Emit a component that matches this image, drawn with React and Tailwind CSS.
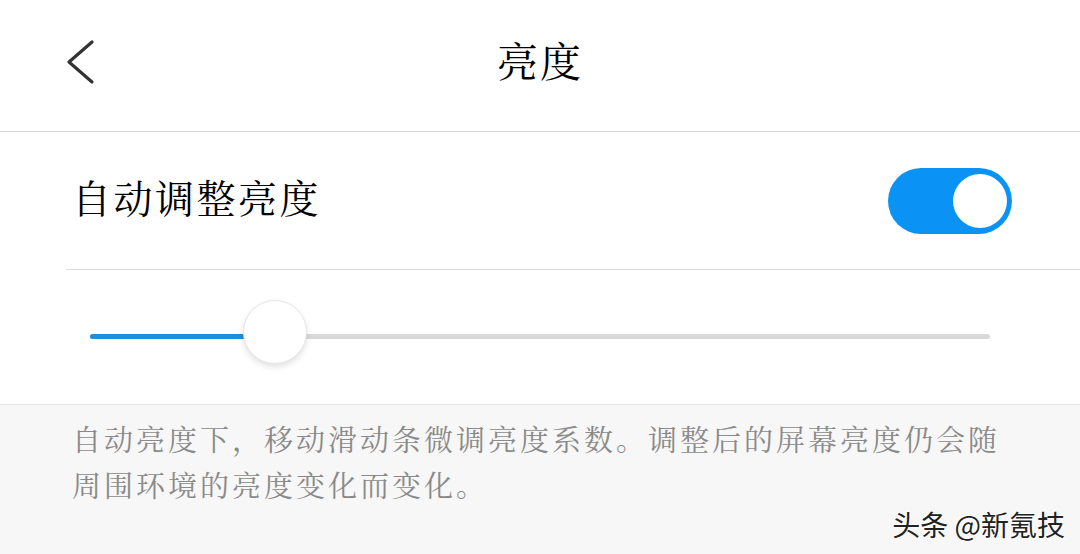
import React from 'react';

const cjk = { fontFamily: '"Noto Serif CJK SC", "Noto Sans CJK SC", serif' };

function BackChevron() {
    return (
        <svg width="40" height="50" viewBox="0 0 40 50" className="text-[#333]">
            <path d="M30 5 L7 25 L30 45" fill="none" stroke="currentColor" strokeWidth="3.2" strokeLinecap="round" strokeLinejoin="round" />
        </svg>
    );
}

function Toggle() {
    return (
        <div className="w-[124px] h-[66px] rounded-full bg-[#0a93f5] flex items-center justify-end pr-[5px]">
            <div className="w-[54px] h-[54px] rounded-full bg-white" />
        </div>
    );
}

function Slider({ value = 0.205 }) {
    return (
        <div className="relative h-[64px] mx-[90px] flex items-center">
            <div className="h-[5px] w-full mt-[8px] rounded-full bg-[#d9d9d9] overflow-hidden">
                <div className="h-full bg-[#1a91e0]" style={{ width: `${value * 100}%` }} />
            </div>
            <div
                className="absolute top-0 w-[64px] h-[64px] -ml-[32px] rounded-full bg-white border border-[#e6e6e6] shadow-[0_3px_6px_rgba(0,0,0,0.12)]"
                style={{ left: `${value * 100}%` }}
            />
        </div>
    );
}

export default function App() {
    return (
        <div className="relative w-[1080px] h-[554px] bg-white overflow-hidden" style={cjk}>
            {/* header */}
            <div className="relative h-[132px] border-b border-[#dcdcdc] flex items-center justify-center">
                <div className="absolute left-[62px] top-[37px]">
                    <BackChevron />
                </div>
                <span className="text-[41px] text-black leading-none -mt-[12px] tracking-[2px]">亮度</span>
            </div>

            {/* auto brightness row */}
            <div className="ml-[66px] h-[138px] border-b border-[#dcdcdc] flex items-center justify-between pr-[68px]">
                <span className="pl-[6px] text-[39px] text-black leading-none tracking-[2.5px] -mt-[8px]">自动调整亮度</span>
                <Toggle />
            </div>

            {/* slider */}
            <div className="h-[134px] pt-[30px]">
                <Slider />
            </div>

            {/* hint */}
            <div className="h-[150px] bg-[#f7f7f7] border-t border-[#e4e4e4] pl-[72px] pr-[70px] pt-[11px]">
                <p className="text-[29px] leading-[46px] text-[#8a8a8a] tracking-[3px]">
                    自动亮度下，移动滑动条微调亮度系数。调整后的屏幕亮度仍会随周围环境的亮度变化而变化。
                </p>
            </div>

            {/* watermark */}
            <div
                className="absolute right-[15px] bottom-[16px] text-[28px] leading-none text-[#222] [text-shadow:1px_1px_0_#fff,-1px_-1px_0_#fff]"
                style={{ fontFamily: '"Noto Sans CJK SC", sans-serif' }}
            >
                头条 @新氪技
            </div>
        </div>
    );
}
